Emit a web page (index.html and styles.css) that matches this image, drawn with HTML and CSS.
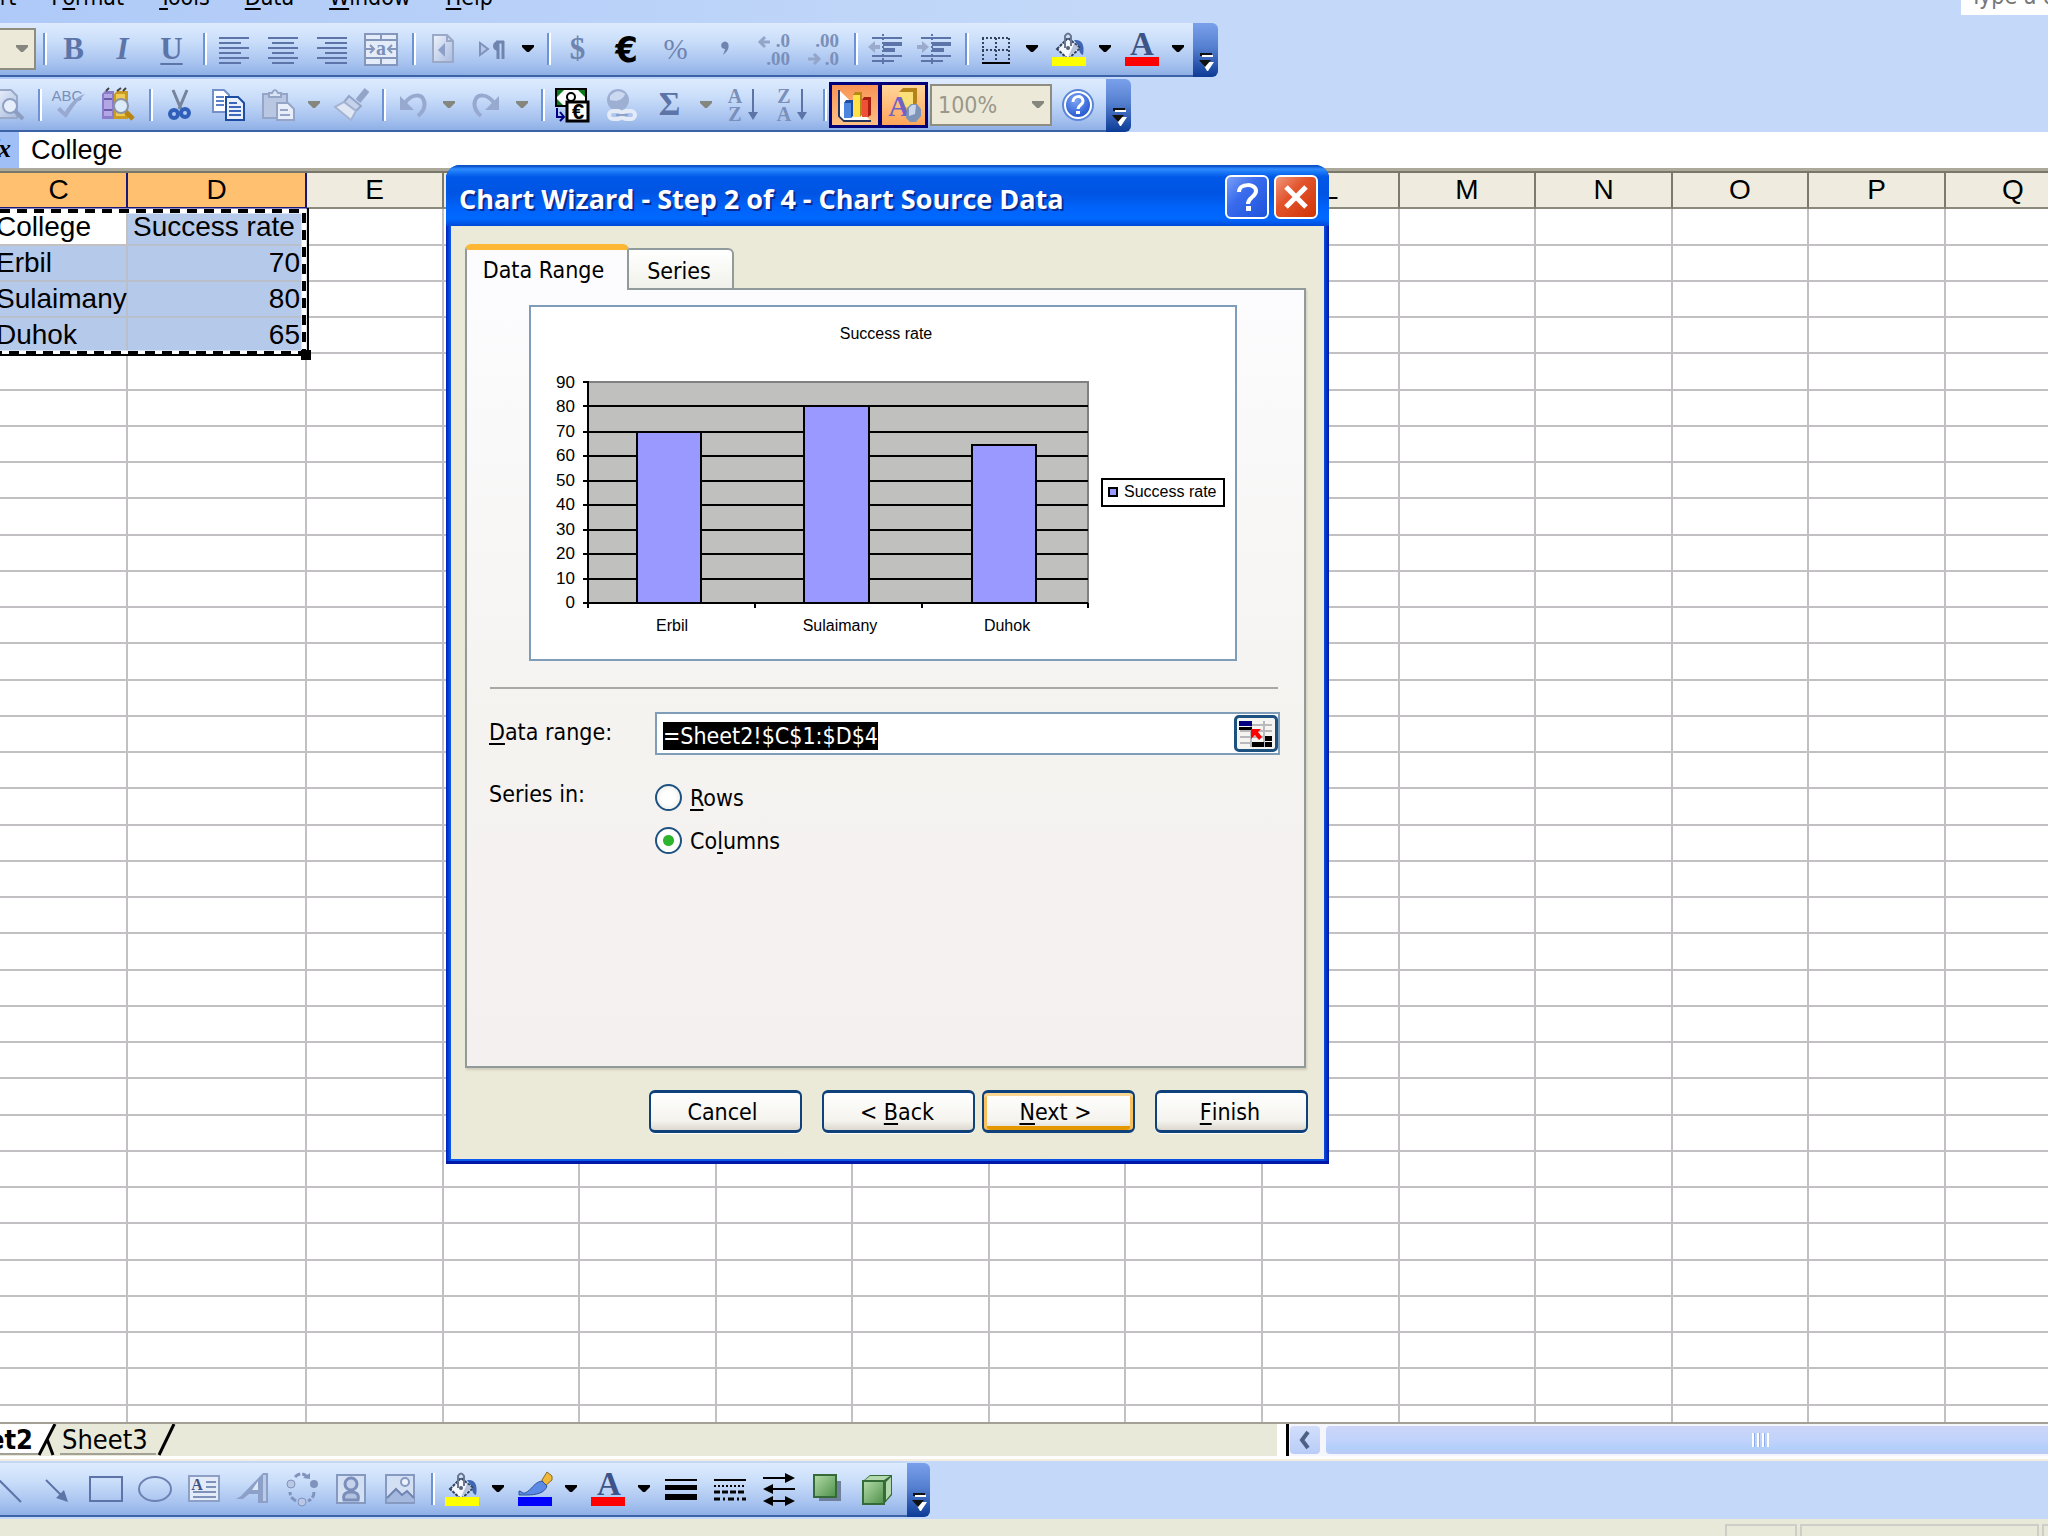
FILE: index.html
```html
<!DOCTYPE html>
<html lang="en">
<head>
<meta charset="utf-8">
<title>Chart Wizard - Step 2 of 4 - Chart Source Data</title>
<link rel="stylesheet" href="styles.css">
</head>
<body>
<svg class="defs" aria-hidden="true">
  <defs>
    <linearGradient id="paper" x1="0" y1="0" x2="1" y2="1"><stop offset="0" stop-color="#eef3fc"/><stop offset="1" stop-color="#a9bbdf"/></linearGradient>
    <linearGradient id="green" x1="0" y1="0" x2="1" y2="1"><stop offset="0" stop-color="#b5dca8"/><stop offset="1" stop-color="#4d8f4a"/></linearGradient>
    <radialGradient id="ball" cx=".4" cy=".3" r=".8"><stop offset="0" stop-color="#7fa6f5"/><stop offset="1" stop-color="#1b50cc"/></radialGradient>
    <symbol id="caret" viewBox="0 0 12 8"><path d="M0 0h12v2L7 7H5L0 2z"/></symbol>
    <symbol id="bucket" viewBox="0 0 34 34">
      <path d="M22 8c8-1 11 5 9 15-3-1-4-4-4-8z" fill="#3f66b4"/>
      <path d="M5 17 16 6l12 10-12 11z" fill="#f4f7fc" stroke="#33425f" stroke-width="2" stroke-dasharray="3 1"/>
      <path d="M16 25 27 16 22 12z" fill="#b5c3dd"/>
      <path d="M13 16V4q3-5 6 0v10" fill="none" stroke="#6b7790" stroke-width="2"/>
      <circle cx="16" cy="16" r="2" fill="#555f78"/>
      <path d="M0 25h34v9H0z" fill="#ff0"/>
    </symbol>
    <symbol id="more" viewBox="0 0 16 18"><path d="M2 0h12v3H2z" fill="#111"/><path d="M4 2h11v2H4z" fill="#fff"/><path d="M4 9h12l-6 9H9z" fill="#fff"/><path d="M1 7h12l-6 7z" fill="#111"/></symbol>
  </defs>
</svg>

<div class="bars">
  <nav class="menubar">
    <a href="#">Insert</a>
    <a href="#">F<u>o</u>rmat</a>
    <a href="#"><u>T</u>ools</a>
    <a href="#"><u>D</u>ata</a>
    <a href="#"><u>W</u>indow</a>
    <a href="#"><u>H</u>elp</a>
    <input class="ask" type="text" aria-label="Ask a question" placeholder="Type a question for help">
  </nav>

  <div class="toolbar">
    <div class="tools">
      <button class="combo font-size" aria-label="Font size"><svg class="caret"><use href="#caret"/></svg></button>
      <i class="sep"></i>
      <button class="tool serif">B</button>
      <button class="tool serif italic">I</button>
      <button class="tool serif"><u>U</u></button>
      <i class="sep"></i>
      <button class="tool" aria-label="Align left"><svg viewBox="0 0 34 34"><path d="M2 6h30M2 11h22M2 16h30M2 21h22M2 26h30M2 31h22" stroke="#5c74a8" stroke-width="2"/></svg></button>
      <button class="tool" aria-label="Center"><svg viewBox="0 0 34 34"><path d="M2 6h30M6 11h22M2 16h30M6 21h22M2 26h30M6 31h22" stroke="#5c74a8" stroke-width="2"/></svg></button>
      <button class="tool" aria-label="Align right"><svg viewBox="0 0 34 34"><path d="M2 6h30M10 11h22M2 16h30M10 21h22M2 26h30M10 31h22" stroke="#5c74a8" stroke-width="2"/></svg></button>
      <button class="tool" aria-label="Merge and center"><svg viewBox="0 0 34 34"><path d="M1 2h32v31H1z" fill="#e4ecf9" stroke="#8496bb" stroke-width="2"/><path d="M1 8h32M1 26h32M17 2v6M17 26v7M2 17h7M25 17h7M6 13l4 4-4 4M28 13l-4 4 4 4" fill="none" stroke="#8496bb" stroke-width="2"/><text x="17" y="23" text-anchor="middle" class="glyph" font-size="20">a</text></svg></button>
      <i class="sep"></i>
      <button class="tool" aria-label="Sheet right-to-left"><svg viewBox="0 0 34 34"><path d="M7 3h14l6 6v21H7z" fill="url(#paper)" stroke="#9aa9c8" stroke-width="2"/><path d="M21 3v6h6" fill="none" stroke="#9aa9c8" stroke-width="2"/><path d="M19 11v14l-7-7z" fill="#8c9fc8"/></svg></button>
      <button class="tool" aria-label="Text direction"><svg viewBox="0 0 34 34"><path d="M5 11v12l8-6z" fill="#b7c6e4" stroke="#7f92bb" stroke-width="2"/><path d="M29 10H21M23 9v18M28 9v18" stroke="#7084b0" stroke-width="3"/><path d="M23 9a5 5 0 0 0 0 10z" fill="#7084b0"/></svg></button>
      <button class="drop" aria-label="Text direction options"><svg class="caret"><use href="#caret"/></svg></button>
      <i class="sep"></i>
      <button class="tool serif light">$</button>
      <button class="tool serif black">€</button>
      <button class="tool serif light small">%</button>
      <button class="tool" aria-label="Comma style"><svg viewBox="0 0 34 34"><path d="M14 11q3-3 6 0c2 5-1 9-5 12 1-3 2-5 2-6-3 0-5-3-3-6z" fill="#7084b0"/></svg></button>
      <button class="tool" aria-label="Increase decimal"><svg viewBox="0 0 34 34"><path d="M13 10H3M8 5l-5 5 5 5" class="soft"/><text x="33" y="15" text-anchor="end" class="glyph" font-size="19">.0</text><text x="33" y="33" text-anchor="end" class="glyph" font-size="19">.00</text></svg></button>
      <button class="tool" aria-label="Decrease decimal"><svg viewBox="0 0 34 34"><path d="M2 27h11M8 22l5 5-5 5" class="soft"/><text x="33" y="15" text-anchor="end" class="glyph" font-size="19">.00</text><text x="33" y="33" text-anchor="end" class="glyph" font-size="19">.0</text></svg></button>
      <i class="sep"></i>
      <button class="tool" aria-label="Decrease indent"><svg viewBox="0 0 34 34"><path d="M4 6h30M4 24h30M4 29h22" stroke="#5c74a8" stroke-width="2" /><path d="M15 12h19M15 18h12" stroke="#5c74a8" stroke-width="4"/><path d="M15 2v31" stroke="#5c74a8" stroke-width="2" stroke-dasharray="2 2"/><path d="M0 15l7-6v4h5v4H7v4z" fill="#9aabcd"/></svg></button>
      <button class="tool" aria-label="Increase indent"><svg viewBox="0 0 34 34"><path d="M4 6h30M4 24h30M4 29h22" stroke="#5c74a8" stroke-width="2"/><path d="M15 12h19M15 18h12" stroke="#5c74a8" stroke-width="4"/><path d="M15 2v31" stroke="#5c74a8" stroke-width="2" stroke-dasharray="2 2"/><path d="M12 15l-7-6v4H0v4h5v4z" fill="#9aabcd"/></svg></button>
      <i class="sep"></i>
      <button class="tool" aria-label="Borders"><svg viewBox="0 0 34 34"><path d="M3 6h28M3 18h28M4 6v24M17 6v24M30 6v24" stroke="#33425f" stroke-width="2" stroke-dasharray="2 2"/><path d="M3 31h28" stroke="#000" stroke-width="2"/></svg></button>
      <button class="drop" aria-label="Border options"><svg class="caret"><use href="#caret"/></svg></button>
      <button class="tool" aria-label="Fill color"><svg><use href="#bucket"/></svg></button>
      <button class="drop" aria-label="Fill color options"><svg class="caret"><use href="#caret"/></svg></button>
      <button class="tool" aria-label="Font color"><svg viewBox="0 0 34 34"><text x="17" y="23" text-anchor="middle" class="letter" font-size="33">A</text><path d="M0 25h34v9H0z" fill="red"/></svg></button>
      <button class="drop" aria-label="Font color options"><svg class="caret"><use href="#caret"/></svg></button>
    </div>
    <button class="chip" aria-label="Toolbar options"><svg><use href="#more"/></svg></button>
  </div>

  <div class="toolbar">
    <div class="tools standard">
      <button class="tool" aria-label="Print preview"><svg viewBox="0 0 34 34"><path d="M4 2h17l6 6v22H4z" fill="url(#paper)" stroke="#9aa9c8" stroke-width="2"/><circle cx="20" cy="18" r="7" fill="#e6eefb" stroke="#8fa0c4" stroke-width="2"/><path d="M25 23l8 8" stroke="#8c9dc2" stroke-width="4"/></svg></button>
      <i class="sep"></i>
      <button class="tool" aria-label="Spelling"><svg viewBox="0 0 34 34"><text x="15" y="13" text-anchor="middle" class="abc" font-size="15">ABC</text><path d="M5 22l3-3 5 5C18 15 25 8 33 6c-7 6-13 14-19 24z" fill="#97a9cf"/></svg></button>
      <button class="tool" aria-label="Research"><svg viewBox="0 0 34 34"><path d="M1 6l3-3h9v28H1z" fill="#8a7cc8"/><path d="M3 6h8v22H3z" fill="#b3a6e4"/><path d="M3 11h8M3 22h8" stroke="#6a5cab" stroke-width="2"/><path d="M13 6l3-3h11v28H13z" fill="#c99b22"/><path d="M15 6h9v22h-9z" fill="#f0cb53"/><path d="M5 3l3-3M16 3l4-3M22 3l3-3" stroke="#444" stroke-width="2"/><circle cx="20" cy="18" r="7" fill="#dcebfb" stroke="#8b93a3" stroke-width="2"/><path d="M25 24l7 7" stroke="#b98410" stroke-width="5"/></svg></button>
      <i class="sep"></i>
      <button class="tool" aria-label="Cut"><svg viewBox="0 0 34 34"><path d="M10 2l8 19M24 2l-8 19" stroke="#76839b" stroke-width="3"/><circle cx="11" cy="26" r="4" fill="none" stroke="#2f5fb8" stroke-width="4"/><circle cx="22" cy="25" r="4" fill="none" stroke="#2f5fb8" stroke-width="4"/></svg></button>
      <button class="tool" aria-label="Copy"><svg viewBox="0 0 34 34"><path d="M1 2h11l5 5v17H1z" fill="#fff" stroke="#7391c8" stroke-width="2"/><path d="M4 9h8M4 13h8M4 17h8" stroke="#5b80c8" stroke-width="2"/><path d="M14 9h12l6 6v17H14z" fill="#eaf1fd" stroke="#1d4ca3" stroke-width="2"/><path d="M17 15h8M17 19h12M17 23h12M17 27h12" stroke="#3b66bb" stroke-width="2"/></svg></button>
      <button class="tool" aria-label="Paste"><svg viewBox="0 0 34 34"><path d="M2 6h24v24H2z" fill="#b9c7e2" stroke="#95a5c8" stroke-width="2"/><path d="M8 9V5h3q3-6 6 0h3v4z" fill="#dbe4f4" stroke="#95a5c8" stroke-width="2"/><path d="M16 15h11l6 6v11H16z" fill="#e8eefa" stroke="#95a5c8" stroke-width="2"/><path d="M19 22h8M19 27h10" stroke="#95a5c8" stroke-width="2"/></svg></button>
      <button class="drop off" aria-label="Paste options"><svg class="caret"><use href="#caret"/></svg></button>
      <button class="tool" aria-label="Format painter"><svg viewBox="0 0 34 34"><path d="M33 2l-9 11" stroke="#93a4c9" stroke-width="6"/><path d="M15 8l12 10-5 5-12-9z" fill="#c5d2ea" stroke="#93a4c9" stroke-width="2"/><path d="M10 14l12 9-5 9L1 19z" fill="#dfe7f5" stroke="#a5b3d2" stroke-width="2"/></svg></button>
      <i class="sep"></i>
      <button class="tool" aria-label="Undo"><svg viewBox="0 0 34 34"><path d="M9 15C15 6 26 5 28 13c2 6-2 12-6 15" fill="none" stroke="#97a9cf" stroke-width="4"/><path d="M4 8v14h14z" fill="#97a9cf"/></svg></button>
      <button class="drop off" aria-label="Undo options"><svg class="caret"><use href="#caret"/></svg></button>
      <button class="tool" aria-label="Redo"><svg viewBox="0 0 34 34"><path d="M25 15C19 6 8 5 6 13c-2 6 2 12 6 15" fill="none" stroke="#97a9cf" stroke-width="4"/><path d="M30 8v14H16z" fill="#97a9cf"/></svg></button>
      <button class="drop off" aria-label="Redo options"><svg class="caret"><use href="#caret"/></svg></button>
      <i class="sep"></i>
      <button class="tool" aria-label="Euro conversion"><svg viewBox="0 0 34 34"><path d="M1 1h30v17H1z" fill="#fff" stroke="#000" stroke-width="2"/><path d="M2 2h7l-7 7zM30 2h-7l7 7zM2 17v-6l6 6z" fill="#0a7a1c"/><circle cx="16" cy="9" r="4" fill="none" stroke="#000" stroke-width="2"/><path d="M12 14h21v19H12z" fill="#fff" stroke="#000" stroke-width="3"/><text x="23" y="31" text-anchor="middle" class="euro" font-size="22">€</text><path d="M2 20v9h7M5 24l4 5-4 4" fill="none" stroke="#000080" stroke-width="2"/></svg></button>
      <button class="tool" aria-label="Hyperlink"><svg viewBox="0 0 34 34"><circle cx="14" cy="12" r="11" fill="#9db0d4"/><path d="M6 8c5-6 10-6 15-2-2 6-8 8-15 6z" fill="#cbd8ef"/><rect x="5" y="23" width="13" height="8" rx="4" fill="none" stroke="#e4ebf7" stroke-width="4"/><rect x="18" y="23" width="13" height="8" rx="4" fill="none" stroke="#e4ebf7" stroke-width="4"/><path d="M12 27h12" stroke="#8fa1c7" stroke-width="2"/></svg></button>
      <button class="tool serif sigma">Σ</button>
      <button class="drop off" aria-label="AutoSum options"><svg class="caret"><use href="#caret"/></svg></button>
      <button class="tool" aria-label="Sort ascending"><svg viewBox="0 0 34 34"><text x="9" y="15" text-anchor="middle" class="glyph" font-size="20">A</text><text x="9" y="33" text-anchor="middle" class="glyph" font-size="20">Z</text><path d="M27 1v26" stroke="#5c74a8" stroke-width="2"/><path d="M22 24h10l-5 8z" fill="#5c74a8"/></svg></button>
      <button class="tool" aria-label="Sort descending"><svg viewBox="0 0 34 34"><text x="9" y="15" text-anchor="middle" class="glyph" font-size="20">Z</text><text x="9" y="33" text-anchor="middle" class="glyph" font-size="20">A</text><path d="M27 1v26" stroke="#5c74a8" stroke-width="2"/><path d="M22 24h10l-5 8z" fill="#5c74a8"/></svg></button>
      <i class="sep"></i>
      <button class="tool on first" aria-label="Chart wizard"><svg viewBox="0 0 34 34"><path d="M1 2v26l5 5h27" fill="#fff" stroke="#23345f" stroke-width="2"/><path d="M2 6l4 6v20l-4-4z" fill="#fff"/><path d="M6 15h7v15H6z" fill="#4d86df"/><path d="M6 15l2-3h7v16l-2 2V15z" fill="#1d4ca3"/><path d="M15 7h7v22h-7z" fill="#ffe14a"/><path d="M15 7l2-3h7v23l-2 2V7z" fill="#b58a12"/><path d="M24 12h6v17h-6z" fill="#ef5136"/><path d="M24 12l2-3h7v18l-3 2V12z" fill="#a91e10"/></svg></button>
      <button class="tool on" aria-label="Drawing"><svg viewBox="0 0 34 34"><path d="M12 4l4-4h14v15l-4 4H12z" fill="#b5831a"/><path d="M12 4h14v15H12z" fill="#fbe07a"/><text x="12" y="28" text-anchor="middle" class="draw" font-size="30">A</text><path d="M20 20l4-4h6l4 5v7l-5 6h-6l-4-4z" fill="#7e93b8"/><path d="M22 20l3-3h4l-1 9-6 2z" fill="#c9d6ea"/></svg></button>
      <button class="combo zoom" aria-label="Zoom">100%<svg class="caret"><use href="#caret"/></svg></button>
      <button class="tool" aria-label="Help"><svg viewBox="0 0 34 34"><circle cx="17" cy="17" r="15" fill="#fff" stroke="#5c86d8" stroke-width="2"/><circle cx="17" cy="17" r="12" fill="url(#ball)"/><path d="M12 14c0-7 10-7 10-1 0 4-5 4-5 8" fill="none" stroke="#fff" stroke-width="3"/><path d="M15 23h4v3h-4z" fill="#fff"/></svg></button>
    </div>
    <button class="chip" aria-label="Toolbar options"><svg><use href="#more"/></svg></button>
  </div>
</div>

<div class="formula">
  <span class="fx">fx</span>
  <input class="formula-input" type="text" aria-label="Formula" value="College">
</div>

<main class="sheet">
  <table class="cells">
    <colgroup><col class="c-first"><col class="c-wide"><col class="odd"><col><col class="odd"><col><col class="odd"><col><col class="odd"><col class="odd"><col><col class="odd"><col><col class="odd"><col></colgroup>
    <thead><tr><th class="picked">C</th><th class="picked">D</th><th>E</th><th>F</th><th>G</th><th>H</th><th>I</th><th>J</th><th>K</th><th>L</th><th>M</th><th>N</th><th>O</th><th>P</th><th>Q</th></tr></thead>
    <tbody id="rows">
      <tr><td>College</td><td class="sel">Success rate</td></tr>
      <tr><td class="sel">Erbil</td><td class="sel num">70</td></tr>
      <tr><td class="sel">Sulaimany</td><td class="sel num">80</td></tr>
      <tr><td class="sel">Duhok</td><td class="sel num">65</td></tr>
    </tbody>
  </table>
  <svg class="marquee" viewBox="0 0 312 152" aria-hidden="true">
    <path d="M0 3h304v142H0" fill="none" stroke="#fff" stroke-width="5"/>
    <path d="M0 3h304v142H0" fill="none" stroke="#000" stroke-width="4" stroke-dasharray="10 7"/>
    <path d="M308 0v147H0" fill="none" stroke="#000" stroke-width="2"/>
    <path d="M301 142h10v10h-10z"/>
  </svg>
</main>

<div class="bottom">
  <div class="tabs">
    <a class="sheet-tab current" href="#">Sheet2</a>
    <svg class="slash" viewBox="0 0 22 32"><path d="M0 0h17L2 31H0z" fill="#fff"/><path d="M17 0 1 31M9 15l6 16" fill="none" stroke="#000" stroke-width="3"/></svg>
    <a class="sheet-tab" href="#">Sheet3</a>
    <svg class="slash" viewBox="0 0 22 32"><path d="M18 0 3 31" stroke="#000" stroke-width="3"/></svg>
  </div>
  <div class="scroll">
    <button class="scroll-left" aria-label="Scroll left"><svg viewBox="0 0 12 20"><path d="M9 2 3 10l6 8" fill="none" stroke="#4d6185" stroke-width="4"/></svg></button>
    <div class="thumb"><i class="grip"></i></div>
  </div>
</div>

<div class="drawing">
  <div class="toolbar">
    <div class="tools draw-tools">
      <button class="tool" aria-label="Line"><svg viewBox="0 0 34 34"><path d="M2 2l28 28" stroke="#5c74a8" stroke-width="2"/></svg></button>
      <button class="tool" aria-label="Arrow"><svg viewBox="0 0 34 34"><path d="M6 8l16 16" stroke="#5c74a8" stroke-width="2"/><path d="M28 30l-4-12-8 8z" fill="#5c74a8"/></svg></button>
      <button class="tool" aria-label="Rectangle"><svg viewBox="0 0 34 34"><path d="M1 5h32v24H1z" fill="none" stroke="#5c74a8" stroke-width="2"/></svg></button>
      <button class="tool" aria-label="Oval"><svg viewBox="0 0 34 34"><ellipse cx="17" cy="17" rx="16" ry="12" fill="none" stroke="#6c82b2" stroke-width="2"/></svg></button>
      <button class="tool" aria-label="Text box"><svg viewBox="0 0 34 34"><path d="M2 4h30v25H2z" fill="#e3ebf9" stroke="#8d9fc4" stroke-width="2"/><text x="10" y="18" text-anchor="middle" class="letter" font-size="16">A</text><path d="M19 10h10M19 15h10M6 20h23M6 25h23" stroke="#7f92bb" stroke-width="2"/></svg></button>
      <button class="tool" aria-label="WordArt"><svg viewBox="0 0 34 34"><path d="M27 1h5v30h4H22V22H13l-6 5h3H0l5-3z" fill="#8da0c8"/><path d="M22 9v9h-6z" fill="#dfe8f7"/><path d="M27 3h3v26h-3z" fill="#bccbe6"/></svg></button>
      <button class="tool" aria-label="Diagram"><svg viewBox="0 0 34 34"><path d="M10 5c4-4 9-4 12 0M29 20c0 4-2 7-6 9M11 29c-4-2-6-5-6-9" fill="none" stroke="#8093bd" stroke-width="3" stroke-dasharray="6 2"/><path d="M18 6l7 1V1z" fill="#8093bd"/><circle cx="6" cy="12" r="4" fill="#b9c8e5" stroke="#8093bd"/><circle cx="29" cy="12" r="4" fill="#8093bd"/><circle cx="17" cy="30" r="4" fill="#b9c8e5" stroke="#8093bd"/></svg></button>
      <button class="tool" aria-label="Clip art"><svg viewBox="0 0 34 34"><path d="M3 3h28v28H3z" fill="#d3dff3" stroke="#8699c1" stroke-width="2"/><circle cx="17" cy="12" r="6" fill="#c4d2eb" stroke="#7a8eb9" stroke-width="3"/><path d="M10 28q-2-8 7-8t7 8z" fill="#b2c3e2" stroke="#7a8eb9" stroke-width="3"/></svg></button>
      <button class="tool" aria-label="Picture"><svg viewBox="0 0 34 34"><path d="M3 3h28v28H3z" fill="#d3dff3" stroke="#8699c1" stroke-width="2"/><path d="M4 26l9-9 6 6 5-4 7 7v4H4z" fill="#a5b8dd"/><path d="M4 26l9-9 6 6 5-4 7 7" fill="none" stroke="#6f84b3" stroke-width="2"/><circle cx="22" cy="10" r="4" fill="#edf3fc" stroke="#8699c1" stroke-width="2"/></svg></button>
      <i class="sep"></i>
      <button class="tool" aria-label="Fill color"><svg><use href="#bucket"/></svg></button>
      <button class="drop" aria-label="Fill color options"><svg class="caret"><use href="#caret"/></svg></button>
      <button class="tool" aria-label="Line color"><svg viewBox="0 0 34 34"><path d="M24 8l5-8 5 4v4l-7 6z" fill="#f0b93a" stroke="#8b6a1a"/><path d="M24 9l5 5c-2 7-11 9-20 9H1v-4c3 0 3 3 6 2 6-2 9-11 17-12z" fill="#5c8be6" stroke="#2c549e"/><path d="M0 25h34v9H0z" fill="#00f"/></svg></button>
      <button class="drop" aria-label="Line color options"><svg class="caret"><use href="#caret"/></svg></button>
      <button class="tool" aria-label="Font color"><svg viewBox="0 0 34 34"><text x="18" y="23" text-anchor="middle" class="letter" font-size="33">A</text><path d="M0 25h34v9H0z" fill="red"/></svg></button>
      <button class="drop" aria-label="Font color options"><svg class="caret"><use href="#caret"/></svg></button>
      <button class="tool" aria-label="Line style"><svg viewBox="0 0 34 34"><path d="M1 7h32v2H1zM1 13h32v5H1zM1 22h32v6H1z"/></svg></button>
      <button class="tool" aria-label="Dash style"><svg viewBox="0 0 34 34"><g fill="none" stroke="#000" stroke-width="2"><path d="M1 8h32"/><path d="M1 14h32" stroke-dasharray="2 2"/><path d="M1 20h32" stroke-width="3" stroke-dasharray="6 2"/><path d="M1 27h32" stroke-width="3" stroke-dasharray="6 3 2 3"/></g></svg></button>
      <button class="tool" aria-label="Arrow style"><svg viewBox="0 0 34 34"><path d="M1 6h30M3 17h30M4 29h26" stroke="#000" stroke-width="2"/><path d="M33 6l-10-5v10zM1 17l10-5v10zM33 29l-10-5v10zM1 29l10-5v10z"/></svg></button>
      <button class="tool" aria-label="Shadow style"><svg viewBox="0 0 34 34"><path d="M8 9h22v20H8z" fill="#6f7f9e"/><path d="M3 3h22v22H3z" fill="url(#green)" stroke="#356b38" stroke-width="2"/></svg></button>
      <button class="tool" aria-label="3-D style"><svg viewBox="0 0 34 34"><path d="M3 9l7-6h22v20l-8 9V9z" fill="#356b38"/><path d="M5 8l5-4h20l-6 4zM26 10l5-5v17l-5 6z" fill="#b3d8ab"/><path d="M3 9h21v23H3z" fill="url(#green)" stroke="#356b38" stroke-width="2"/></svg></button>
    </div>
    <button class="chip" aria-label="Toolbar options"><svg><use href="#more"/></svg></button>
  </div>
</div>
<footer class="status"><span class="pane-a"></span><span class="pane-b"></span><span class="pane-c"></span></footer>

<section class="dialog" role="dialog" aria-labelledby="wizard-title">
  <header class="title-bar">
    <h1 id="wizard-title">Chart Wizard - Step 2 of 4 - Chart Source Data</h1>
    <button class="caption-button" aria-label="Help"><svg viewBox="0 0 40 40"><path d="M12 15c0-9 17-9 17-1 0 6-8 6-8 13" fill="none" stroke="#fff" stroke-width="4"/><path d="M19 29h5v5h-5z" fill="#fff"/></svg></button>
    <button class="caption-button close" aria-label="Close"><svg viewBox="0 0 40 40"><path d="M10 10l20 20M30 10 10 30" stroke="#fff" stroke-width="5"/></svg></button>
  </header>
  <form class="dialog-body">
    <div class="dialog-tabs">
      <button type="button" class="dialog-tab active">Data Range</button>
      <button type="button" class="dialog-tab">Series</button>
    </div>
    <div class="page">
      <svg class="chart" viewBox="531 307 704 352" role="img" aria-label="Success rate by city">
        <text x="886" y="339" text-anchor="middle">Success rate</text>
        <path d="M588 382h500v221H588z" fill="#c0c0be"/>
        <path d="M588 382h500v221" fill="none" stroke="#808080" stroke-width="2"/>
        <path d="M588 406h500M588 432h500M588 456h500M588 481h500M588 505h500M588 530h500M588 554h500M588 579h500" stroke="#000" stroke-width="2"/>
        <path d="M583 382h5M583 406h5M583 432h5M583 456h5M583 481h5M583 505h5M583 530h5M583 554h5M583 579h5M583 603h505M588 381v227M755 603v5M922 603v5M1088 603v5" stroke="#000" stroke-width="2"/>
        <g fill="#9999ff" stroke="#000" stroke-width="2"><path d="M637 432h64v171h-64z"/><path d="M804 406h65v197h-65z"/><path d="M972 445h64v158h-64z"/></g>
        <g text-anchor="end" font-size="17"><text x="575" y="388">90</text><text x="575" y="412">80</text><text x="575" y="437">70</text><text x="575" y="461">60</text><text x="575" y="486">50</text><text x="575" y="510">40</text><text x="575" y="535">30</text><text x="575" y="559">20</text><text x="575" y="584">10</text><text x="575" y="608">0</text></g>
        <g text-anchor="middle"><text x="672" y="631">Erbil</text><text x="840" y="631">Sulaimany</text><text x="1007" y="631">Duhok</text></g>
        <path d="M1102 479h122v27h-122z" fill="#fff" stroke="#000" stroke-width="2"/>
        <path d="M1109 488h8v8h-8z" fill="#9999ff" stroke="#000" stroke-width="2"/>
        <text x="1124" y="497">Success rate</text>
      </svg>
      <hr class="rule">
      <div class="fields">
        <label class="field-label" for="range"><u>D</u>ata range:</label>
        <div class="range-box">
          <input id="range" type="text" value="=Sheet2!$C$1:$D$4">
          <button type="button" class="picker" aria-label="Collapse dialog"><svg viewBox="0 0 34 28"><path d="M1 5h32M1 11h32M1 17h32M1 23h32M12 1v26M25 1v26" stroke="#b9b9bd" stroke-width="2"/><path d="M0 1h13v5H0z" fill="#000080"/><path d="M0 7h13v3H0zM26 16h7v5h-7zM13 22h12v5H13zM26 22h7v5h-7z"/><path d="M12 9h10l-3 3 4 5-3 3-4-5-4 4z" fill="#f00"/></svg></button>
        </div>
        <span class="field-label series">Series in:</span>
        <div class="choices">
          <label class="choice"><input type="radio" name="series"><span><u>R</u>ows</span></label>
          <label class="choice"><input type="radio" name="series" checked><span>Co<u>l</u>umns</span></label>
        </div>
      </div>
    </div>
    <div class="actions">
      <button type="button" class="action">Cancel</button>
      <button type="button" class="action spaced">&lt; <u>B</u>ack</button>
      <button type="button" class="action default"><u>N</u>ext &gt;</button>
      <button type="button" class="action spaced"><u>F</u>inish</button>
    </div>
  </form>
</section>
<script src="script.js"></script>
</body>
</html>
```
FILE: styles.css
```css
* { box-sizing: border-box; }
body {
  margin: 0;
  height: 100vh;
  display: flex;
  flex-direction: column;
  overflow: hidden;
  position: relative;
  background: #fff;
  color: #000;
  font: 23px/28px "DejaVu Sans Condensed", "DejaVu Sans", sans-serif;
}
button, input { font: inherit; color: inherit; margin: 0; padding: 0; border: 0; background: none; }
button { display: inline-flex; align-items: center; justify-content: center; }
a { color: inherit; text-decoration: none; }
.defs { position: absolute; width: 0; height: 0; }

/* menus and toolbars */
.bars { background: linear-gradient(90deg, #afcaf8, #c4d9f9 55%); flex: none; }
.menubar {
  height: 23px;
  display: flex;
  align-items: flex-end;
  gap: 35px;
  margin-left: -43px;
  line-height: 28px;
  padding-bottom: 12px;
  overflow: hidden;
}
.ask { margin-left: auto; margin-bottom: -4px; width: 87px; height: 30px; padding-left: 9px; padding-bottom: 8px; background: #fff; font-size: 23px; flex: none; }
.ask::placeholder { color: #777; opacity: 1; }
.toolbar { display: flex; height: 54px; margin-bottom: 2px; }
.bars .toolbar:last-child { height: 53px; margin-bottom: 0; }
.tools {
  display: flex;
  align-items: center;
  flex: none;
  padding-right: 3px;
  background: linear-gradient(#deebfe, #cadefa 35%, #a9c4f0 75%, #8fb0e6);
  border-bottom: 2px solid #3c62a8;
}
.standard { margin-left: -18px; padding-right: 4px; }
.tool { width: 49px; height: 46px; flex: none; }
.tool svg { width: 34px; height: 34px; overflow: visible; }
.drop { width: 24px; height: 46px; flex: none; }
.caret { width: 12px; height: 8px; flex: none; }
.off .caret, .combo .caret { fill: #85877f; }
.sep { width: 13px; height: 32px; flex: none; position: relative; border-left: 7px solid transparent; background: linear-gradient(90deg, #6c93d8 2px, #fff 2px 4px, transparent 4px); background-clip: padding-box; }
.serif { font: bold 31px "Liberation Serif", serif; color: #5c74a8; }
.italic { font-style: italic; }
.light { color: #7084b0; }
.small { font-weight: normal; font-size: 29px; }
.black { color: #000; font: bold 36px "DejaVu Sans Condensed", "DejaVu Sans", sans-serif; }
.sigma { font-size: 33px; }
.serif u { text-decoration-thickness: 2px; text-underline-offset: 4px; }
.glyph { font-family: "Liberation Serif", serif; font-weight: bold; fill: #7a8fb9; }
.letter { font-family: "Liberation Serif", serif; font-weight: bold; fill: #3d5488; }
.abc { font-family: "Liberation Sans", sans-serif; fill: #7a8fb9; }
.euro { font-family: "Liberation Sans", sans-serif; font-weight: bold; }
.draw { font-family: "Liberation Serif", serif; font-weight: bold; fill: #7063c4; }
.soft { fill: none; stroke: #93a5c9; stroke-width: 3; }
.on { border: 3px solid #00007b; background: linear-gradient(#ffd59a, #ffa459); }
.on.first { background: linear-gradient(#f99356, #ffbf82); width: 50px; border-right-width: 1px; }
.combo { height: 42px; flex: none; background: #ece9d8; border: 2px solid #8f8d80; justify-content: space-between; color: #9a988b; }
.font-size { width: 36px; border-left: 0; padding-left: 16px; padding-right: 7px; }
.zoom { width: 122px; margin: 0 1px 0 2px; padding: 0 6px; }
.chip { width: 25px; flex: none; align-items: flex-end; padding-bottom: 6px; background: linear-gradient(#7aa0ea, #5580d0 45%, #0c3b97); border-radius: 0 6px 6px 0; }
.chip svg { width: 16px; height: 18px; }

/* formula bar */
.formula { display: flex; height: 41px; flex: none; background: #fff; border-bottom: 2px solid #79776a; box-shadow: inset 0 -3px #aca99b; font: 27px/36px "Liberation Sans", sans-serif; }
.fx { width: 19px; height: 36px; background: #9fbff6; font: italic bold 26px/34px "Liberation Serif", serif; display: flex; justify-content: flex-end; padding-right: 8px; overflow: hidden; }
.formula-input { flex: 1; height: 36px; padding-left: 12px; }

/* worksheet */
.sheet { flex: 1; min-height: 0; overflow: hidden; position: relative; border-bottom: 2px solid #a3a195; font: 28px/34px "Liberation Sans", sans-serif; }
.cells { width: 2091px; margin-left: -9px; table-layout: fixed; border-collapse: separate; border-spacing: 0; }
.cells col { width: 136px; }
.cells .odd, .cells .c-first { width: 137px; }
.cells .c-wide { width: 179px; }
.cells th { height: 36px; padding: 0; font-weight: normal; line-height: 34px; background: #efecdf; border-right: 2px solid #7c7a6d; border-bottom: 2px solid #8b897c; }
.cells .picked { background: #ffc170; border-color: #17177c; }
.cells td { height: 36px; padding: 0 5px; border-right: 2px solid #c2c0c2; border-bottom: 2px solid #c2c0c2; white-space: nowrap; }
.cells tr:nth-child(4n+1) td { height: 37px; }
.cells .sel { background: #b5c9ea; border-color: #b9bfcb; }
.cells .num { text-align: right; }
.marquee { position: absolute; left: 0; top: 35px; width: 312px; height: 152px; }

/* sheet tabs and scrollbar */
.bottom { display: flex; height: 37px; flex: none; background: #e9e9d9; border-bottom: 2px solid #f2eddf; box-shadow: inset 0 -3px #fff; }
.tabs { display: flex; width: 1275px; height: 32px; flex: none; font-size: 27px; line-height: 31px; }
.sheet-tab { height: 31px; padding: 0 8px 0 2px; border-bottom: 2px solid #a3a195; }
.current { width: 38px; flex: none; display: flex; justify-content: flex-end; background: #fff; font-weight: bold; padding: 0 5px 0 0; }
.slash { width: 22px; height: 32px; flex: none; }
.scroll { flex: 1; display: flex; height: 32px; margin-left: 2px; padding: 2px 0 2px 1px; border-left: 9px solid #fff; background: #f4f6fb; box-shadow: inset 3px 0 #000; gap: 6px; }
.scroll-left { width: 30px; margin-left: 3px; background: linear-gradient(#d2defb, #b9cdf8); border-radius: 4px; }
.scroll-left svg { width: 12px; height: 20px; }
.thumb { flex: 1; background: linear-gradient(#cdd5f8, #c1d3fb 50%, #b2cffb 80%, #bccaf5); border-radius: 4px 0 0 4px; display: flex; align-items: center; justify-content: center; padding-left: 146px; }
.grip { width: 17px; height: 14px; background: repeating-linear-gradient(90deg, #fff 0 2px, #8eaff0 2px 3px, transparent 3px 5px); }

/* drawing toolbar and status bar */
.drawing { flex: none; height: 58px; padding-top: 2px; background: #c4d8f9; overflow: hidden; }
.drawing .tools { padding-right: 6px; }
.draw-tools { margin-left: -17px; }
.drawing .chip { width: 23px; }
.status { height: 17px; flex: none; display: flex; justify-content: flex-end; gap: 3px; background: #e9e9d9; padding-top: 5px; }
.status span { border: 2px solid #cfcdc8; border-bottom: 0; }
.pane-a { width: 72px; }
.pane-b { width: 239px; }
.pane-c { width: 6px; border-right: 0 !important; }

/* wizard dialog */
.dialog {
  position: absolute;
  left: 446px;
  top: 165px;
  width: 883px;
  min-height: 999px;
  display: flex;
  flex-direction: column;
  padding: 0 5px 5px;
  border-radius: 14px 14px 0 0;
  background: linear-gradient(90deg, #0020b8, #0a5cf0 5px, #0a4ee0 878px, #0016a4);
  box-shadow: inset 0 -3px #0018a8;
}
.title-bar {
  height: 61px;
  margin: 0 -5px;
  padding: 3px 11px 0 13px;
  display: flex;
  align-items: center;
  gap: 5px;
  border-radius: 14px 14px 0 0;
  background: linear-gradient(#0a50c8 1px, #2f8cff 4px, #1a78f8 7px, #0058e8 12px, #0054e3 28px, #0064fc 44px, #0068ff 54px, #0048d8);
}
.title-bar h1 { flex: 1; margin: 0; padding-top: 3px; color: #fff; font: bold 27px/34px "Open Sans", "Noto Sans", sans-serif; text-shadow: 2px 2px #0a2a90; white-space: nowrap; }
.caption-button { width: 44px; height: 44px; border: 2px solid #fff; border-radius: 6px; background: linear-gradient(135deg, #7ba0f8, #3a6cec 40%, #1c52dc); }
.caption-button.close { background: linear-gradient(135deg, #f0977c, #e2542c 40%, #cf3506); }
.caption-button svg { width: 40px; height: 40px; }
.dialog-body { flex: 1; display: flex; flex-direction: column; padding: 18px 18px 26px 14px; background: #ebe9d8; }
.dialog-tabs { display: flex; align-items: flex-end; height: 44px; }
.dialog-tab { height: 40px; width: 105px; padding: 4px 3px 0 0; background: linear-gradient(#fff, #f1f1ea); border: 2px solid #919b9c; border-bottom: 0; border-left: 0; border-radius: 0 6px 0 0; }
.dialog-tab.active { position: relative; width: 164px; height: 46px; margin-bottom: -2px; padding: 0 7px 0 0; background: #fcfcfe; border-left: 2px solid #919b9c; border-top: 6px solid #fdb734; border-radius: 6px 6px 0 0; }
.page { flex: 1; border: 2px solid #919b9c; background: linear-gradient(#fcfcfe, #f5f3f0 55%, #f4f0f0); padding-top: 15px; box-shadow: 1px 2px 2px #cfccbb; }
.chart { display: block; width: 708px; height: 356px; margin-left: 62px; background: #fff; border: 2px solid #7f9db9; font: 16px "Liberation Sans", sans-serif; }
.rule { height: 2px; margin: 26px 26px 23px 23px; border: 0; background: #a9a8a3; }
.fields { display: grid; grid-template-columns: 166px 1fr; row-gap: 28px; margin: 0 24px 0 22px; }
.field-label { padding-top: 6px; }
.series { padding-top: 0; margin-top: -3px; }
.range-box { display: flex; height: 43px; border: 2px solid #7f9db9; background: #fff; }
.range-box input { flex: 1; min-width: 0; padding: 4px 0 0 6px; outline: 0; }
.range-box input::selection { background: #000; color: #fff; }
.picker { width: 44px; margin: 1px 0; border: 3px solid #1c5180; border-radius: 5px; background: #f4f4f0; }
.picker svg { width: 34px; height: 28px; }
.choices { display: flex; flex-direction: column; gap: 15px; }
.choice { display: flex; align-items: center; gap: 8px; height: 28px; }
.choice span { padding-top: 2px; }
.choice input { appearance: none; width: 27px; height: 27px; border: 2px solid #1d5281; border-radius: 50%; background: radial-gradient(#fff 40%, #e4e4dd); }
.choice input:checked { background: radial-gradient(#2db52d 5px, #fff 6px); }
u { text-decoration-thickness: 2px; text-underline-offset: 3px; }
.actions { display: flex; justify-content: flex-end; margin: 22px -2px 0 0; }
.action { width: 153px; height: 43px; border: 3px solid #0f417a; border-left-width: 2px; border-right-width: 2px; border-radius: 6px; background: linear-gradient(#fff, #f4f3ee 75%, #dcd8cf); box-shadow: 0 1px 1px #fff; padding-right: 6px; white-space: pre; }
.action.spaced { margin-left: 20px; padding-right: 3px; }
.action.default { margin-left: 7px; box-shadow: inset 0 3px #fbd592, inset 3px 0 #f8c15f, inset -3px 0 #f8c15f, inset 0 -4px #e59700; }
```
FILE: script.js
```js
// Fill the worksheet with empty cells out to column Q and row 34.
const body = document.getElementById('rows');
for (let r = 0; r < 34; r++) {
  const row = body.rows[r] || body.insertRow();
  while (row.cells.length < 15) row.insertCell();
}
// The range is selected when the wizard opens.
const range = document.getElementById('range');
range.focus();
range.select();
```
